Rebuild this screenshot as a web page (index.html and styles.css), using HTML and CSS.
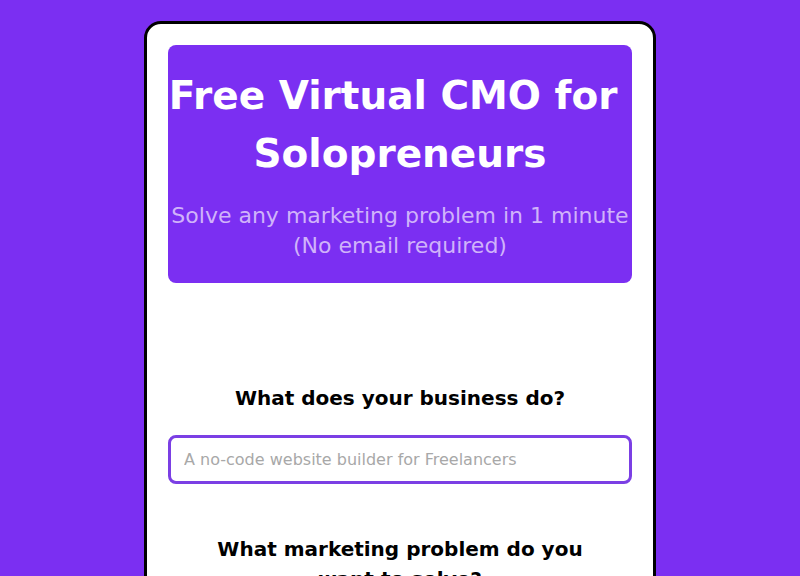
FILE: index.html
```html
<!DOCTYPE html>
<html>
<head>
<meta charset="utf-8">
<link rel="stylesheet" href="styles.css">
</head>
<body>
<main class="card">
  <section class="hero">
    <h1 class="title">Free Virtual CMO for&nbsp;<br>Solopreneurs</h1>
    <p class="subtitle">Solve any marketing problem in 1 minute<br>(No email required)</p>
  </section>
  <form class="form">
    <label class="question" for="biz">What does your business do?</label>
    <input class="field" id="biz" type="text" placeholder="A no-code website builder for Freelancers">
    <label class="question q2" for="prob">What marketing problem do you want to solve?</label>
  </form>
</main>
</body>
</html>
```
FILE: styles.css
```css
html, body {
  margin: 0;
  padding: 0;
  height: 100%;
  overflow: hidden;
}
body {
  background: #7b2ff2;
  font-family: "DejaVu Sans", sans-serif;
}
.card {
  box-sizing: border-box;
  width: 512px;
  margin: 21px auto 0;
  background: #fff;
  border: 3px solid #000;
  border-radius: 17px;
  padding: 21px 21px 40px;
}
.hero {
  background: #7b2ff2;
  border-radius: 8px;
  padding: 22px 0 22px;
  text-align: center;
}
.title {
  margin: 0;
  color: #fff;
  font-size: 39px;
  line-height: 58px;
  font-weight: 700;
}
.subtitle {
  margin: 18px 0 0;
  color: #d0b3fa;
  font-size: 22px;
  line-height: 30px;
  white-space: nowrap;
}
.form {
  display: flex;
  flex-direction: column;
  padding-top: 100px;
}
.question {
  display: block;
  text-align: center;
  font-weight: 700;
  font-size: 20px;
  line-height: 30px;
  color: #000;
}
.field {
  box-sizing: border-box;
  margin-top: 22px;
  height: 49px;
  width: 100%;
  border: 3px solid #7b3fe4;
  border-radius: 8px;
  padding: 0 13px;
  font-family: inherit;
  font-size: 16px;
  color: #333;
  outline: none;
}
.field::placeholder {
  color: #a8a8a8;
}
.q2 {
  margin-top: 50px;
  padding: 0 40px;
}
```
